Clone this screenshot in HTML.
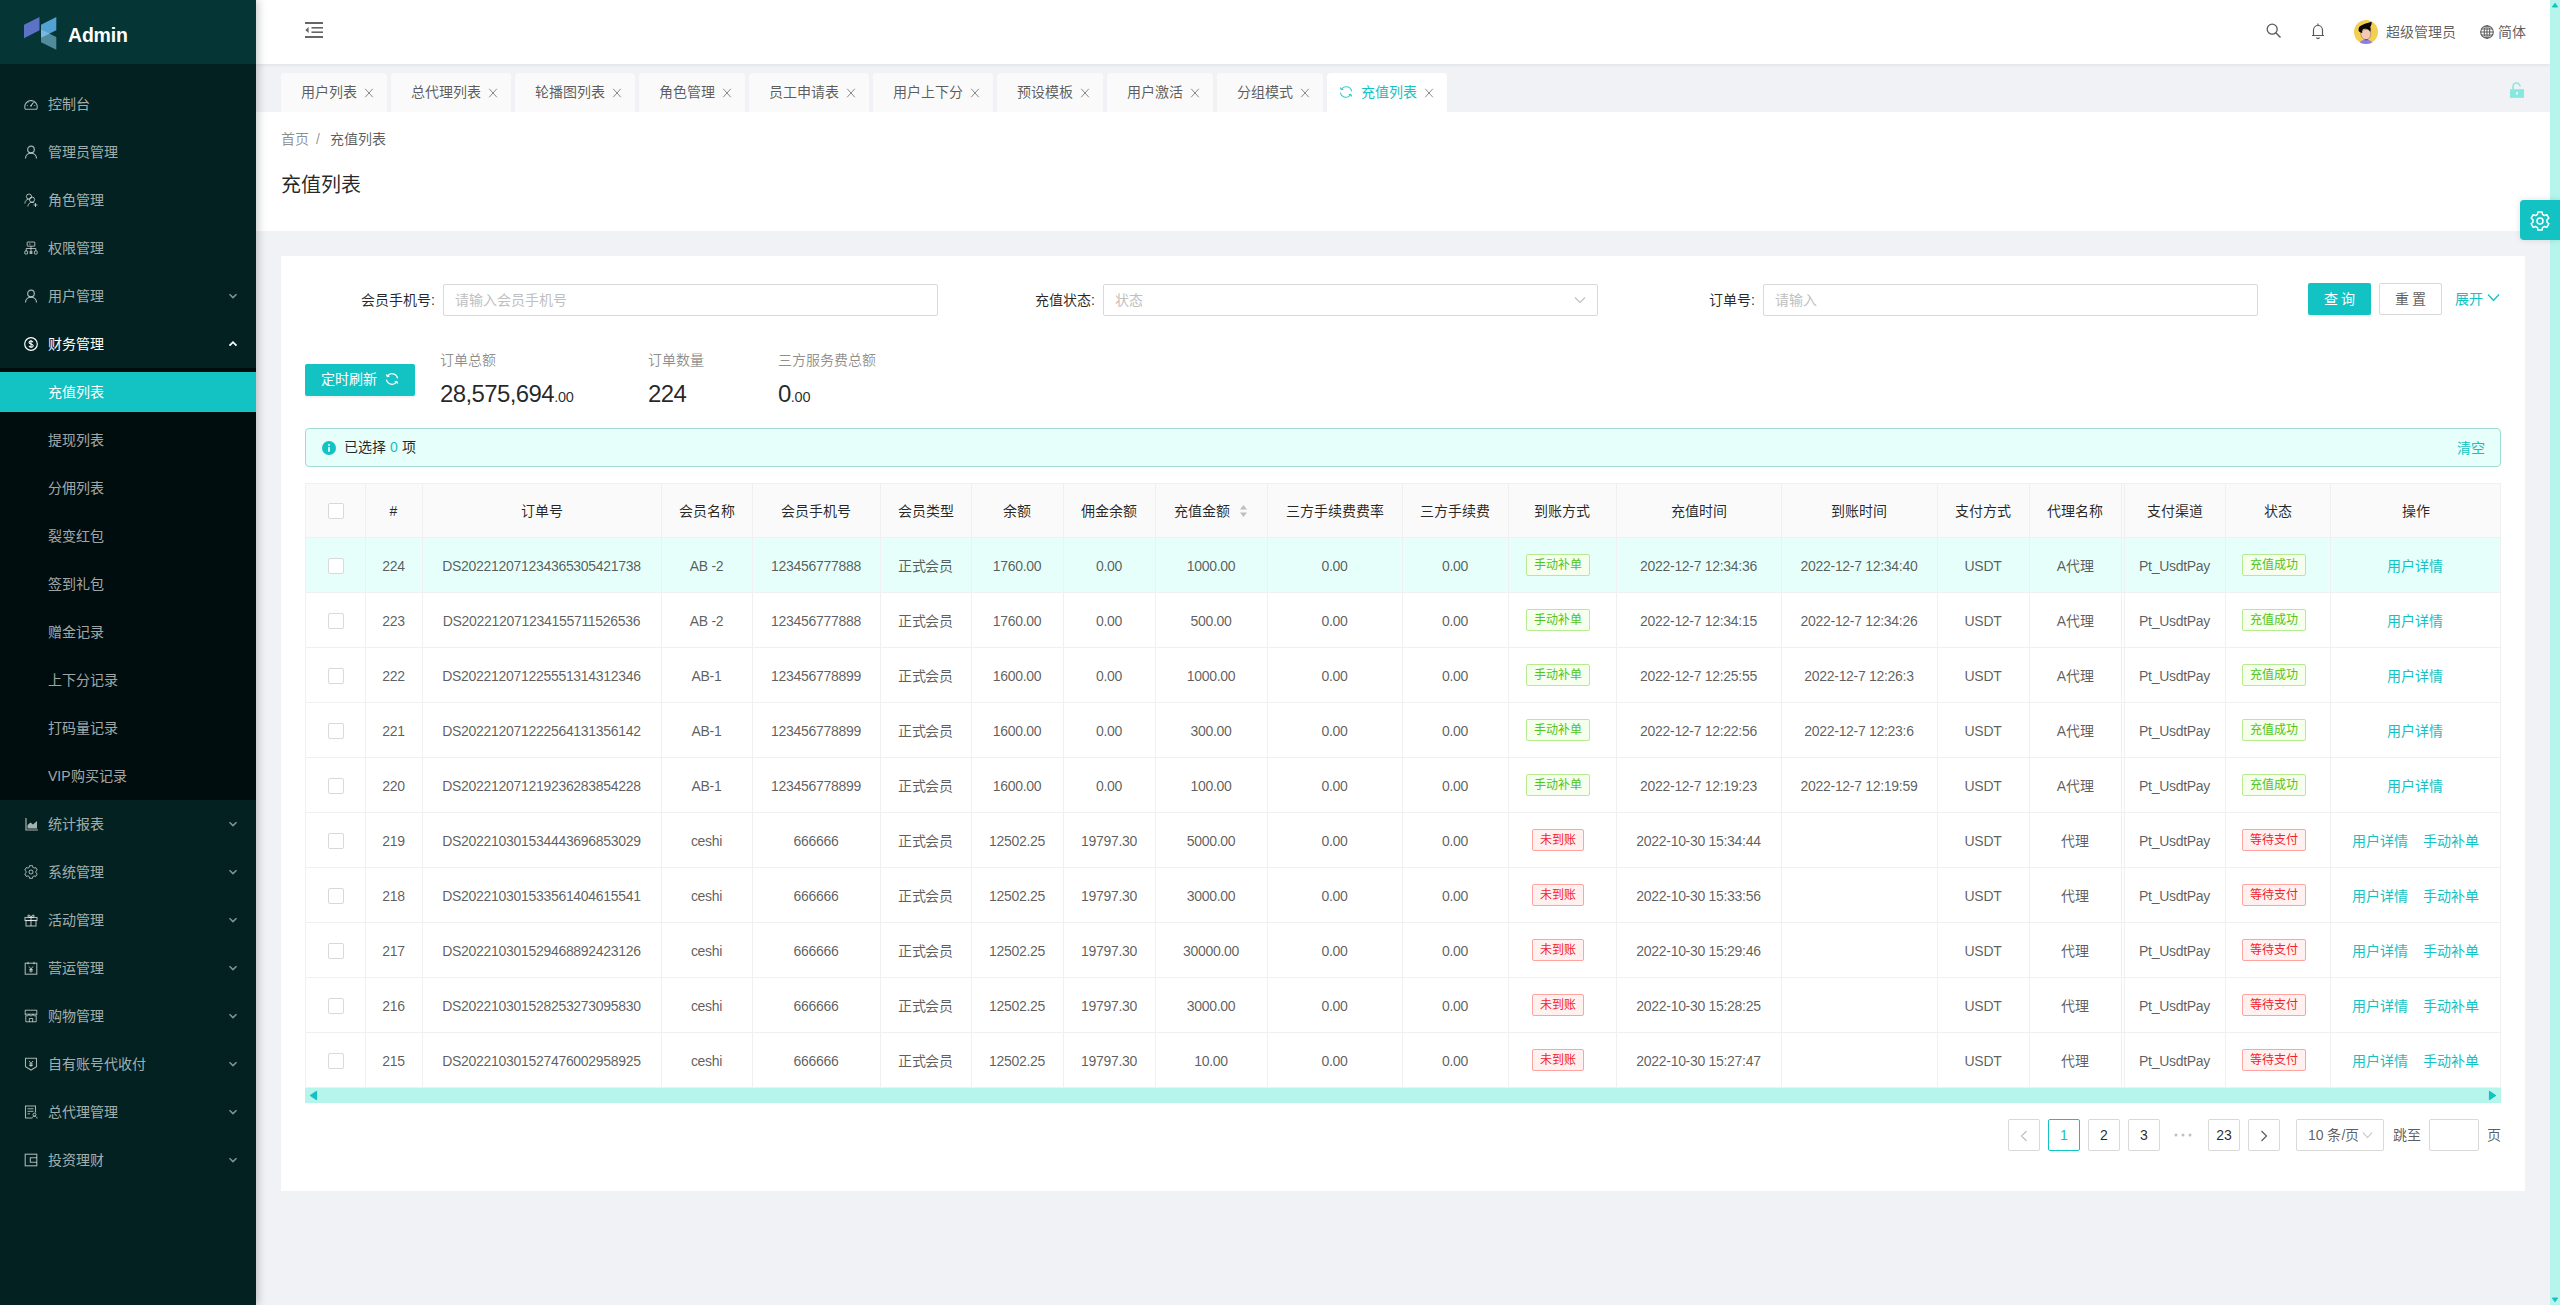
<!DOCTYPE html><html lang="zh-CN"><head><meta charset="utf-8"><title>充值列表</title><style>
html,body{margin:0;padding:0}
body{width:2560px;height:1305px;overflow:hidden;position:relative;background:#f0f2f5;font-family:"Liberation Sans",sans-serif;font-size:14px;}
.t{position:absolute;white-space:nowrap}
.b{position:absolute;box-sizing:border-box}
</style></head><body>
<div class="b" style="left:256px;top:0px;width:2294px;height:64px;background:#fff;box-shadow:0 1px 4px rgba(0,21,41,.08);z-index:2"></div>
<div class="b" style="left:256px;top:112px;width:2294px;height:119px;background:#fff"></div>
<div class="b" style="left:281px;top:256px;width:2244px;height:935px;background:#fff"></div>
<div class="b" style="left:0;top:0;width:256px;height:1305px;background:#022120;box-shadow:2px 0 8px rgba(29,35,41,.25);z-index:5">
<div class="b" style="left:0px;top:0px;width:256px;height:64px;background:#053535"></div>
<svg class="b" style="left:23px;top:16px;" width="35" height="35" viewBox="0 0 35 35">
<polygon points="1,8.7 16.5,1 16.5,14.3 1,22.3" fill="#5b72c6"/>
<polygon points="18,8.7 33.3,1 33.3,14.3 18,21.8" fill="#52a3d3"/>
<polygon points="18,13.4 33.3,20.9 33.3,33.8 18,26.3" fill="#4f8b9b"/>
<polygon points="18,13.4 26.9,17.4 18,21.8" fill="#78b8e3"/>
</svg>
<div class="t" style="left:68px;top:20.0px;font-size:19.5px;line-height:30px;color:#fff;font-weight:bold;letter-spacing:-0.2px">Admin</div>
<div style="color:rgba(255,255,255,.65)"><svg class="b" style="left:24px;top:97px" width="14" height="14" viewBox="0 0 14 14"><path d="M1.3 12.2A6.2 6.2 0 1 1 12.7 12.2z" fill="none" stroke="currentColor" stroke-width="1.1" stroke-linejoin="round"/><path d="M7 8.6 9.4 5.6" stroke="currentColor" stroke-width="1.1"/><circle cx="7" cy="8.8" r=".9" fill="currentColor"/><path d="M2.8 8.6h1M3.9 5l.6.6M7 3.4v.9M10.1 5l-.6.6M11.2 8.6h-1" stroke="currentColor" stroke-width=".9"/></svg></div>
<div class="t" style="left:48px;top:93.0px;font-size:14px;line-height:22px;color:rgba(255,255,255,.65);font-weight:normal;">控制台</div>
<div style="color:rgba(255,255,255,.65)"><svg class="b" style="left:24px;top:145px" width="14" height="14" viewBox="0 0 14 14"><circle cx="7" cy="4.5" r="3.3" fill="none" stroke="currentColor" stroke-width="1.2"/><path d="M1.5 13.5c0-3.2 2.4-5.3 5.5-5.3s5.5 2.1 5.5 5.3" fill="none" stroke="currentColor" stroke-width="1.2"/></svg></div>
<div class="t" style="left:48px;top:141.0px;font-size:14px;line-height:22px;color:rgba(255,255,255,.65);font-weight:normal;">管理员管理</div>
<div style="color:rgba(255,255,255,.65)"><svg class="b" style="left:24px;top:193px" width="14" height="14" viewBox="0 0 14 14"><circle cx="5" cy="3.6" r="2.6" fill="none" stroke="currentColor" stroke-width="1"/><path d="M.8 10.5c.2-2.6 1.8-4.2 3.6-4.3" fill="none" stroke="currentColor" stroke-width="1"/><circle cx="8" cy="6.6" r="2.6" fill="none" stroke="currentColor" stroke-width="1"/><path d="M3.8 13.5c.3-2.6 2-4.2 4.2-4.2 1 0 1.7.3 2.3.7" fill="none" stroke="currentColor" stroke-width="1"/><path d="M11.5 10v4M9.5 12h4" stroke="currentColor" stroke-width="1"/></svg></div>
<div class="t" style="left:48px;top:189.0px;font-size:14px;line-height:22px;color:rgba(255,255,255,.65);font-weight:normal;">角色管理</div>
<div style="color:rgba(255,255,255,.65)"><svg class="b" style="left:24px;top:241px" width="14" height="14" viewBox="0 0 14 14"><rect x="3.2" y="1" width="7.6" height="4.2" rx=".4" fill="none" stroke="currentColor" stroke-width="1"/><path d="M5 3.1h1.5" stroke="currentColor" stroke-width="1"/><path d="M7 5.2v2.3M2.2 10V7.5h9.6V10M7 7.5V10" fill="none" stroke="currentColor" stroke-width="1"/><rect x=".8" y="10" width="2.8" height="3" rx=".5" fill="none" stroke="currentColor" stroke-width="1"/><rect x="5.6" y="10" width="2.8" height="3" rx=".5" fill="currentColor"/><rect x="10.4" y="10" width="2.8" height="3" rx=".5" fill="none" stroke="currentColor" stroke-width="1"/></svg></div>
<div class="t" style="left:48px;top:237.0px;font-size:14px;line-height:22px;color:rgba(255,255,255,.65);font-weight:normal;">权限管理</div>
<div style="color:rgba(255,255,255,.65)"><svg class="b" style="left:24px;top:289px" width="14" height="14" viewBox="0 0 14 14"><circle cx="7" cy="4.5" r="3.3" fill="none" stroke="currentColor" stroke-width="1.2"/><path d="M1.5 13.5c0-3.2 2.4-5.3 5.5-5.3s5.5 2.1 5.5 5.3" fill="none" stroke="currentColor" stroke-width="1.2"/></svg></div>
<div class="t" style="left:48px;top:285.0px;font-size:14px;line-height:22px;color:rgba(255,255,255,.65);font-weight:normal;">用户管理</div>
<svg class="b" style="left:228px;top:291.5px" width="10" height="8" viewBox="0 0 10 8"><path d="M1.5 2.2 5 5.6 8.5 2.2" fill="none" stroke="rgba(255,255,255,.5)" stroke-width="1.6"/></svg>
<div style="color:#fff"><svg class="b" style="left:24px;top:337px" width="14" height="14" viewBox="0 0 14 14"><circle cx="7" cy="7" r="6.3" fill="none" stroke="currentColor" stroke-width="1.2"/><path d="M9 5.2c-.3-.8-1-1.2-2-1.2-1.2 0-2 .6-2 1.5 0 2 4.2 1.1 4.2 3.2 0 .9-.9 1.5-2.1 1.5-1.1 0-1.9-.5-2.2-1.3M7 3v8" fill="none" stroke="currentColor" stroke-width="1.1"/></svg></div>
<div class="t" style="left:48px;top:333.0px;font-size:14px;line-height:22px;color:#fff;font-weight:normal;">财务管理</div>
<svg class="b" style="left:228px;top:340px" width="10" height="8" viewBox="0 0 10 8"><path d="M1.5 5.6 5 2.2 8.5 5.6" fill="none" stroke="#fff" stroke-width="1.8"/></svg>
<div class="b" style="left:0px;top:368px;width:256px;height:432px;background:#000d0e"></div>
<div class="b" style="left:0px;top:372px;width:256px;height:40px;background:#13c2c2"></div>
<div class="t" style="left:48px;top:381.0px;font-size:14px;line-height:22px;color:#fff;font-weight:normal;">充值列表</div>
<div class="t" style="left:48px;top:429.0px;font-size:14px;line-height:22px;color:rgba(255,255,255,.65);font-weight:normal;">提现列表</div>
<div class="t" style="left:48px;top:477.0px;font-size:14px;line-height:22px;color:rgba(255,255,255,.65);font-weight:normal;">分佣列表</div>
<div class="t" style="left:48px;top:525.0px;font-size:14px;line-height:22px;color:rgba(255,255,255,.65);font-weight:normal;">裂变红包</div>
<div class="t" style="left:48px;top:573.0px;font-size:14px;line-height:22px;color:rgba(255,255,255,.65);font-weight:normal;">签到礼包</div>
<div class="t" style="left:48px;top:621.0px;font-size:14px;line-height:22px;color:rgba(255,255,255,.65);font-weight:normal;">赠金记录</div>
<div class="t" style="left:48px;top:669.0px;font-size:14px;line-height:22px;color:rgba(255,255,255,.65);font-weight:normal;">上下分记录</div>
<div class="t" style="left:48px;top:717.0px;font-size:14px;line-height:22px;color:rgba(255,255,255,.65);font-weight:normal;">打码量记录</div>
<div class="t" style="left:48px;top:765.0px;font-size:14px;line-height:22px;color:rgba(255,255,255,.65);font-weight:normal;">VIP购买记录</div>
<div style="color:rgba(255,255,255,.65)"><svg class="b" style="left:25px;top:817px" width="14" height="14" viewBox="0 0 14 14"><path d="M1 1v12h12" fill="none" stroke="currentColor" stroke-width="1.2"/><path d="M2.5 11.5V8l3-2.5 2.5 2 4-3.5v7.5z" fill="currentColor"/></svg></div>
<div class="t" style="left:48px;top:813.0px;font-size:14px;line-height:22px;color:rgba(255,255,255,.65);font-weight:normal;">统计报表</div>
<svg class="b" style="left:228px;top:819.5px" width="10" height="8" viewBox="0 0 10 8"><path d="M1.5 2.2 5 5.6 8.5 2.2" fill="none" stroke="rgba(255,255,255,.5)" stroke-width="1.6"/></svg>
<div style="color:rgba(255,255,255,.65)"><svg class="b" style="left:24px;top:865px" width="14" height="14" viewBox="0 0 14 14"><path d="M4.55 2.76 L5.16 2.46 L5.54 0.67 L8.46 0.67 L8.84 2.46 L9.45 2.76 L10.02 3.14 L11.75 2.57 L13.22 5.10 L11.85 6.32 L11.90 7.00 L11.85 7.68 L13.22 8.90 L11.75 11.43 L10.02 10.86 L9.45 11.24 L8.84 11.54 L8.46 13.33 L5.54 13.33 L5.16 11.54 L4.55 11.24 L3.98 10.86 L2.25 11.43 L0.78 8.90 L2.15 7.68 L2.10 7.00 L2.15 6.32 L0.78 5.10 L2.25 2.57 L3.98 3.14z" fill="none" stroke="currentColor" stroke-width="1" stroke-linejoin="round"/><circle cx="7" cy="7" r="2" fill="none" stroke="currentColor" stroke-width="1"/></svg></div>
<div class="t" style="left:48px;top:861.0px;font-size:14px;line-height:22px;color:rgba(255,255,255,.65);font-weight:normal;">系统管理</div>
<svg class="b" style="left:228px;top:867.5px" width="10" height="8" viewBox="0 0 10 8"><path d="M1.5 2.2 5 5.6 8.5 2.2" fill="none" stroke="rgba(255,255,255,.5)" stroke-width="1.6"/></svg>
<div style="color:rgba(255,255,255,.65)"><svg class="b" style="left:24px;top:913px" width="14" height="14" viewBox="0 0 14 14"><rect x="1" y="4.5" width="12" height="3" fill="none" stroke="currentColor" stroke-width="1.1"/><rect x="2" y="7.5" width="10" height="5.5" fill="none" stroke="currentColor" stroke-width="1.1"/><path d="M7 4.5V13M7 4.5C6 2 4 1.5 4 3s3 1.5 3 1.5M7 4.5C8 2 10 1.5 10 3s-3 1.5-3 1.5" fill="none" stroke="currentColor" stroke-width="1.1"/></svg></div>
<div class="t" style="left:48px;top:909.0px;font-size:14px;line-height:22px;color:rgba(255,255,255,.65);font-weight:normal;">活动管理</div>
<svg class="b" style="left:228px;top:915.5px" width="10" height="8" viewBox="0 0 10 8"><path d="M1.5 2.2 5 5.6 8.5 2.2" fill="none" stroke="rgba(255,255,255,.5)" stroke-width="1.6"/></svg>
<div style="color:rgba(255,255,255,.65)"><svg class="b" style="left:24px;top:961px" width="14" height="14" viewBox="0 0 14 14"><rect x="1.2" y="2.2" width="11.6" height="11" fill="none" stroke="currentColor" stroke-width="1.1"/><path d="M4 .8v2.5M10 .8v2.5M5 5.5l2 2.5 2-2.5M7 8v3.5M5.2 8.5h3.6M5.2 10h3.6" fill="none" stroke="currentColor" stroke-width="1"/></svg></div>
<div class="t" style="left:48px;top:957.0px;font-size:14px;line-height:22px;color:rgba(255,255,255,.65);font-weight:normal;">营运管理</div>
<svg class="b" style="left:228px;top:963.5px" width="10" height="8" viewBox="0 0 10 8"><path d="M1.5 2.2 5 5.6 8.5 2.2" fill="none" stroke="rgba(255,255,255,.5)" stroke-width="1.6"/></svg>
<div style="color:rgba(255,255,255,.65)"><svg class="b" style="left:24px;top:1009px" width="14" height="14" viewBox="0 0 14 14"><path d="M1.2 5.2V1.2h11.6v4M1.2 5.2c0 1 .8 1.6 1.9 1.6S5 6.2 5 5.2c0 1 .9 1.6 2 1.6s2-.6 2-1.6c0 1 .8 1.6 1.9 1.6s1.9-.6 1.9-1.6M1.2 5.2h11.6M1.8 6.8v6h10.4v-6" fill="none" stroke="currentColor" stroke-width="1"/><path d="M5.3 12.8V9.5h3.4v3.3" fill="none" stroke="currentColor" stroke-width="1"/></svg></div>
<div class="t" style="left:48px;top:1005.0px;font-size:14px;line-height:22px;color:rgba(255,255,255,.65);font-weight:normal;">购物管理</div>
<svg class="b" style="left:228px;top:1011.5px" width="10" height="8" viewBox="0 0 10 8"><path d="M1.5 2.2 5 5.6 8.5 2.2" fill="none" stroke="rgba(255,255,255,.5)" stroke-width="1.6"/></svg>
<div style="color:rgba(255,255,255,.65)"><svg class="b" style="left:24px;top:1057px" width="14" height="14" viewBox="0 0 14 14"><path d="M1.5 1.2h11v8.5L7 13 1.5 9.7z" fill="none" stroke="currentColor" stroke-width="1.1"/><path d="M5 4l2 2.3 2-2.3M7 6.3v3.5M5.2 7h3.6M5.2 8.5h3.6" fill="none" stroke="currentColor" stroke-width="1"/></svg></div>
<div class="t" style="left:48px;top:1053.0px;font-size:14px;line-height:22px;color:rgba(255,255,255,.65);font-weight:normal;">自有账号代收付</div>
<svg class="b" style="left:228px;top:1059.5px" width="10" height="8" viewBox="0 0 10 8"><path d="M1.5 2.2 5 5.6 8.5 2.2" fill="none" stroke="rgba(255,255,255,.5)" stroke-width="1.6"/></svg>
<div style="color:rgba(255,255,255,.65)"><svg class="b" style="left:24px;top:1105px" width="14" height="14" viewBox="0 0 14 14"><path d="M7.5 13H1.5V1h10v6.5" fill="none" stroke="currentColor" stroke-width="1.1"/><path d="M3.5 3.8h6M3.5 6.3h6M3.5 8.8h2.5" stroke="currentColor" stroke-width="1"/><circle cx="10.5" cy="9.6" r="1.5" fill="none" stroke="currentColor" stroke-width="1"/><path d="M7.8 13.6c.3-1.5 1.3-2.4 2.7-2.4s2.4.9 2.7 2.4" fill="none" stroke="currentColor" stroke-width="1"/></svg></div>
<div class="t" style="left:48px;top:1101.0px;font-size:14px;line-height:22px;color:rgba(255,255,255,.65);font-weight:normal;">总代理管理</div>
<svg class="b" style="left:228px;top:1107.5px" width="10" height="8" viewBox="0 0 10 8"><path d="M1.5 2.2 5 5.6 8.5 2.2" fill="none" stroke="rgba(255,255,255,.5)" stroke-width="1.6"/></svg>
<div style="color:rgba(255,255,255,.65)"><svg class="b" style="left:24px;top:1153px" width="14" height="14" viewBox="0 0 14 14"><rect x="1.2" y="1.2" width="11.6" height="11.6" fill="none" stroke="currentColor" stroke-width="1.1"/><path d="M12.8 4.8H6.3v4.4h6.5" fill="none" stroke="currentColor" stroke-width="1.1"/></svg></div>
<div class="t" style="left:48px;top:1149.0px;font-size:14px;line-height:22px;color:rgba(255,255,255,.65);font-weight:normal;">投资理财</div>
<svg class="b" style="left:228px;top:1155.5px" width="10" height="8" viewBox="0 0 10 8"><path d="M1.5 2.2 5 5.6 8.5 2.2" fill="none" stroke="rgba(255,255,255,.5)" stroke-width="1.6"/></svg>
</div>
<div style="position:absolute;left:0;top:0;z-index:3">
<svg class="b" style="left:305px;top:22px;" width="18" height="16" viewBox="0 0 18 16"><rect x="0" y="0" width="18" height="2" fill="#666"/><rect x="0" y="14" width="18" height="2" fill="#666"/><rect x="6.5" y="5" width="11.5" height="1.6" fill="#666"/><rect x="6.5" y="9.4" width="11.5" height="1.6" fill="#666"/><polygon points="0.3,8 3.6,5 3.6,11" fill="#666"/></svg>
<svg class="b" style="left:2266px;top:23px;" width="16" height="16" viewBox="0 0 16 16"><circle cx="6.2" cy="6.2" r="5" fill="none" stroke="#595959" stroke-width="1.3"/><path d="M9.8 9.8 14.5 14.5" stroke="#595959" stroke-width="1.4"/></svg>
<svg class="b" style="left:2311px;top:22px;" width="14" height="18" viewBox="0 0 14 18"><path d="M7 1.5V3M2.5 13V8a4.5 4.5 0 0 1 9 0v5M1 13.5h12M5.5 15.5a1.6 1.6 0 0 0 3 0" fill="none" stroke="#595959" stroke-width="1.2"/></svg>
<svg class="b" style="left:2354px;top:20px;" width="24" height="24" viewBox="0 0 24 24"><defs><clipPath id="av"><circle cx="12" cy="12" r="12"/></clipPath></defs>
<g clip-path="url(#av)"><rect width="24" height="24" fill="#f2cf4f"/>
<path d="M4.5 24.5C5.5 21.5 8.5 19.6 12 19.6s6.5 1.9 7.5 4.9z" fill="#8c80e6"/>
<ellipse cx="12.3" cy="19.4" rx="1.7" ry=".8" fill="#222"/>
<path d="M6.6 10.5C6.4 16.5 8.8 19.6 12 19.6c3.2 0 4.7-2.6 4.7-6.6V8.5z" fill="#f5c9b6" stroke="#4a3a30" stroke-width=".35"/>
<path d="M4.6 10.8C4.2 8.2 5.3 6.2 7.2 5.6 9.6 3.8 13.2 3.1 17.6 1.8c.3 2-.4 3.9-1.3 4.9.5 2 .3 4-.1 5.4-.9-2.4-2.6-3.6-5.8-3.4-1.6.1-2.4 1.2-2.2 4.2-1.4 0-2.8-.8-3.6-2.1z" fill="#0a0a0a"/>
</g></svg>
<div class="t" style="left:2386px;top:21.0px;font-size:14px;line-height:22px;color:rgba(0,0,0,.65);font-weight:normal;">超级管理员</div>
<svg class="b" style="left:2480px;top:25px;" width="14" height="14" viewBox="0 0 14 14"><circle cx="7" cy="7" r="6.3" fill="none" stroke="#595959" stroke-width="1.1"/><ellipse cx="7" cy="7" rx="2.8" ry="6.3" fill="none" stroke="#595959" stroke-width="1"/><path d="M.7 7h12.6M1.6 4h10.8M1.6 10h10.8M7 .7v12.6" stroke="#595959" stroke-width="1"/></svg>
<div class="t" style="left:2498px;top:21.0px;font-size:14px;line-height:22px;color:rgba(0,0,0,.65);font-weight:normal;">简体</div>
</div>
<div class="b" style="left:281px;top:73px;width:106px;height:39px;background:#fafafa;border-radius:4px 4px 0 0"></div>
<div class="t" style="left:301px;top:81.0px;font-size:14px;line-height:22px;color:rgba(0,0,0,.65);font-weight:normal;">用户列表</div>
<svg class="b" style="left:364px;top:88px" width="10" height="10" viewBox="0 0 10 10"><path d="M1.2 .8 8.8 9.2M8.8 .8 1.2 9.2" stroke="rgba(0,0,0,.45)" stroke-width="1"/></svg>
<div class="b" style="left:391px;top:73px;width:120px;height:39px;background:#fafafa;border-radius:4px 4px 0 0"></div>
<div class="t" style="left:411px;top:81.0px;font-size:14px;line-height:22px;color:rgba(0,0,0,.65);font-weight:normal;">总代理列表</div>
<svg class="b" style="left:488px;top:88px" width="10" height="10" viewBox="0 0 10 10"><path d="M1.2 .8 8.8 9.2M8.8 .8 1.2 9.2" stroke="rgba(0,0,0,.45)" stroke-width="1"/></svg>
<div class="b" style="left:515px;top:73px;width:120px;height:39px;background:#fafafa;border-radius:4px 4px 0 0"></div>
<div class="t" style="left:535px;top:81.0px;font-size:14px;line-height:22px;color:rgba(0,0,0,.65);font-weight:normal;">轮播图列表</div>
<svg class="b" style="left:612px;top:88px" width="10" height="10" viewBox="0 0 10 10"><path d="M1.2 .8 8.8 9.2M8.8 .8 1.2 9.2" stroke="rgba(0,0,0,.45)" stroke-width="1"/></svg>
<div class="b" style="left:639px;top:73px;width:106px;height:39px;background:#fafafa;border-radius:4px 4px 0 0"></div>
<div class="t" style="left:659px;top:81.0px;font-size:14px;line-height:22px;color:rgba(0,0,0,.65);font-weight:normal;">角色管理</div>
<svg class="b" style="left:722px;top:88px" width="10" height="10" viewBox="0 0 10 10"><path d="M1.2 .8 8.8 9.2M8.8 .8 1.2 9.2" stroke="rgba(0,0,0,.45)" stroke-width="1"/></svg>
<div class="b" style="left:749px;top:73px;width:120px;height:39px;background:#fafafa;border-radius:4px 4px 0 0"></div>
<div class="t" style="left:769px;top:81.0px;font-size:14px;line-height:22px;color:rgba(0,0,0,.65);font-weight:normal;">员工申请表</div>
<svg class="b" style="left:846px;top:88px" width="10" height="10" viewBox="0 0 10 10"><path d="M1.2 .8 8.8 9.2M8.8 .8 1.2 9.2" stroke="rgba(0,0,0,.45)" stroke-width="1"/></svg>
<div class="b" style="left:873px;top:73px;width:120px;height:39px;background:#fafafa;border-radius:4px 4px 0 0"></div>
<div class="t" style="left:893px;top:81.0px;font-size:14px;line-height:22px;color:rgba(0,0,0,.65);font-weight:normal;">用户上下分</div>
<svg class="b" style="left:970px;top:88px" width="10" height="10" viewBox="0 0 10 10"><path d="M1.2 .8 8.8 9.2M8.8 .8 1.2 9.2" stroke="rgba(0,0,0,.45)" stroke-width="1"/></svg>
<div class="b" style="left:997px;top:73px;width:106px;height:39px;background:#fafafa;border-radius:4px 4px 0 0"></div>
<div class="t" style="left:1017px;top:81.0px;font-size:14px;line-height:22px;color:rgba(0,0,0,.65);font-weight:normal;">预设模板</div>
<svg class="b" style="left:1080px;top:88px" width="10" height="10" viewBox="0 0 10 10"><path d="M1.2 .8 8.8 9.2M8.8 .8 1.2 9.2" stroke="rgba(0,0,0,.45)" stroke-width="1"/></svg>
<div class="b" style="left:1107px;top:73px;width:106px;height:39px;background:#fafafa;border-radius:4px 4px 0 0"></div>
<div class="t" style="left:1127px;top:81.0px;font-size:14px;line-height:22px;color:rgba(0,0,0,.65);font-weight:normal;">用户激活</div>
<svg class="b" style="left:1190px;top:88px" width="10" height="10" viewBox="0 0 10 10"><path d="M1.2 .8 8.8 9.2M8.8 .8 1.2 9.2" stroke="rgba(0,0,0,.45)" stroke-width="1"/></svg>
<div class="b" style="left:1217px;top:73px;width:106px;height:39px;background:#fafafa;border-radius:4px 4px 0 0"></div>
<div class="t" style="left:1237px;top:81.0px;font-size:14px;line-height:22px;color:rgba(0,0,0,.65);font-weight:normal;">分组模式</div>
<svg class="b" style="left:1300px;top:88px" width="10" height="10" viewBox="0 0 10 10"><path d="M1.2 .8 8.8 9.2M8.8 .8 1.2 9.2" stroke="rgba(0,0,0,.45)" stroke-width="1"/></svg>
<div class="b" style="left:1327px;top:73px;width:120px;height:39px;background:#fff;border-radius:4px 4px 0 0"></div>
<svg class="b" style="left:1339px;top:85px;" width="14" height="14" viewBox="0 0 14 14"><path d="M12.6 6.3A5.7 5.7 0 0 0 2.3 4.2M1.4 7.7a5.7 5.7 0 0 0 10.3 2.1" fill="none" stroke="#13c2c2" stroke-width="1.1" opacity=".85"/><path d="M1.3 2.6 2.3 4.6 4.4 4.2M12.7 11.4 11.7 9.4 9.6 9.8" fill="none" stroke="#13c2c2" stroke-width="1.1" opacity=".85"/></svg>
<div class="t" style="left:1361px;top:81.0px;font-size:14px;line-height:22px;color:#13c2c2;font-weight:normal;">充值列表</div>
<svg class="b" style="left:1424px;top:88px" width="10" height="10" viewBox="0 0 10 10"><path d="M1.2 .8 8.8 9.2M8.8 .8 1.2 9.2" stroke="rgba(0,0,0,.45)" stroke-width="1"/></svg>
<svg class="b" style="left:2510px;top:82px;" width="14" height="16" viewBox="0 0 14 16"><path d="M3 7.5V4.5a3.5 3.5 0 0 1 7 0" fill="none" stroke="#87e8de" stroke-width="1.6"/><rect x="0" y="7.2" width="14" height="8.6" fill="#87e8de"/><rect x="6.2" y="10" width="1.6" height="2.6" fill="#e6fffb"/></svg>
<div class="t" style="left:281px;top:128.0px;font-size:14px;line-height:22px;color:rgba(0,0,0,.45);font-weight:normal;">首页</div>
<div class="t" style="left:316px;top:128.0px;font-size:14px;line-height:22px;color:rgba(0,0,0,.45);font-weight:normal;">/</div>
<div class="t" style="left:330px;top:128.0px;font-size:14px;line-height:22px;color:rgba(0,0,0,.65);font-weight:normal;">充值列表</div>
<div class="t" style="left:281px;top:171.0px;font-size:20px;line-height:28px;color:rgba(0,0,0,.85);font-weight:normal;">充值列表</div>
<div class="t" style="left:35px;width:400px;text-align:right;top:289.0px;font-size:14px;line-height:22px;color:rgba(0,0,0,.85);font-weight:normal">会员手机号:</div>
<div class="b" style="left:443px;top:284px;width:495px;height:32px;border:1px solid #d9d9d9;border-radius:2px;background:#fff"></div>
<div class="t" style="left:455px;top:289.0px;font-size:14px;line-height:22px;color:#bfbfbf;font-weight:normal;">请输入会员手机号</div>
<div class="t" style="left:695px;width:400px;text-align:right;top:289.0px;font-size:14px;line-height:22px;color:rgba(0,0,0,.85);font-weight:normal">充值状态:</div>
<div class="b" style="left:1103px;top:284px;width:495px;height:32px;border:1px solid #d9d9d9;border-radius:2px;background:#fff"></div>
<div class="t" style="left:1115px;top:289.0px;font-size:14px;line-height:22px;color:#bfbfbf;font-weight:normal;">状态</div>
<svg class="b" style="left:1574px;top:295px;" width="12" height="10" viewBox="0 0 12 10"><path d="M1 2.5 6 7.5 11 2.5" fill="none" stroke="rgba(0,0,0,.25)" stroke-width="1.2"/></svg>
<div class="t" style="left:1355px;width:400px;text-align:right;top:289.0px;font-size:14px;line-height:22px;color:rgba(0,0,0,.85);font-weight:normal">订单号:</div>
<div class="b" style="left:1763px;top:284px;width:495px;height:32px;border:1px solid #d9d9d9;border-radius:2px;background:#fff"></div>
<div class="t" style="left:1775px;top:289.0px;font-size:14px;line-height:22px;color:#bfbfbf;font-weight:normal;">请输入</div>
<div class="b" style="left:2308px;top:283px;width:63px;height:32px;background:#13c2c2;border-radius:2px;box-shadow:0 2px 0 rgba(0,0,0,.045)"></div>
<div class="t" style="left:2308.0px;width:63px;text-align:center;top:288.0px;font-size:14px;line-height:22px;color:#fff;font-weight:normal;">查&nbsp;询</div>
<div class="b" style="left:2379px;top:283px;width:63px;height:32px;border:1px solid #d9d9d9;border-radius:2px;background:#fff"></div>
<div class="t" style="left:2379.0px;width:63px;text-align:center;top:288.0px;font-size:14px;line-height:22px;color:rgba(0,0,0,.65);font-weight:normal;">重&nbsp;置</div>
<div class="t" style="left:2455px;top:288.0px;font-size:14px;line-height:22px;color:#13c2c2;font-weight:normal;">展开</div>
<svg class="b" style="left:2487px;top:293px;" width="13" height="10" viewBox="0 0 13 10"><path d="M1 1.5 6.5 7.5 12 1.5" fill="none" stroke="#13c2c2" stroke-width="1.3"/></svg>
<div class="b" style="left:305px;top:364px;width:110px;height:32px;background:#13c2c2;border-radius:2px;box-shadow:0 2px 0 rgba(0,0,0,.045)"></div>
<div class="t" style="left:321px;top:368.0px;font-size:14px;line-height:22px;color:#fff;font-weight:normal;">定时刷新</div>
<svg class="b" style="left:385px;top:372px;" width="14" height="14" viewBox="0 0 14 14"><path d="M12.6 6.3A5.7 5.7 0 0 0 2.3 4.2M1.4 7.7a5.7 5.7 0 0 0 10.3 2.1" fill="none" stroke="#fff" stroke-width="1.2"/><path d="M1.3 2.6 2.3 4.6 4.4 4.2M12.7 11.4 11.7 9.4 9.6 9.8" fill="none" stroke="#fff" stroke-width="1.2"/></svg>
<div class="t" style="left:440px;top:349.0px;font-size:14px;line-height:22px;color:rgba(0,0,0,.45);font-weight:normal;">订单总额</div>
<div class="t" style="left:440px;top:378px;font-size:24px;line-height:32px;color:rgba(0,0,0,.85);letter-spacing:-0.6px">28,575,694<span style="font-size:14.5px;letter-spacing:-0.2px">.00</span></div>
<div class="t" style="left:648px;top:349.0px;font-size:14px;line-height:22px;color:rgba(0,0,0,.45);font-weight:normal;">订单数量</div>
<div class="t" style="left:648px;top:378px;font-size:24px;line-height:32px;color:rgba(0,0,0,.85);letter-spacing:-0.6px">224</div>
<div class="t" style="left:778px;top:349.0px;font-size:14px;line-height:22px;color:rgba(0,0,0,.45);font-weight:normal;">三方服务费总额</div>
<div class="t" style="left:778px;top:378px;font-size:24px;line-height:32px;color:rgba(0,0,0,.85);letter-spacing:-0.6px">0<span style="font-size:14.5px;letter-spacing:-0.2px">.00</span></div>
<div class="b" style="left:305px;top:428px;width:2196px;height:39px;background:#e6fffb;border:1px solid #a3dbd4;border-radius:4px"></div>
<svg class="b" style="left:322px;top:441px;" width="14" height="14" viewBox="0 0 14 14"><circle cx="7" cy="7" r="7" fill="#13c2c2"/><rect x="6.2" y="6" width="1.6" height="4.8" fill="#fff"/><circle cx="7" cy="4" r=".9" fill="#fff"/></svg>
<div class="t" style="left:344px;top:436px;line-height:22px;color:rgba(0,0,0,.85)">已选择 <span style="color:#13c2c2">0</span> 项</div>
<div class="t" style="left:2457px;top:437.0px;font-size:14px;line-height:22px;color:#13c2c2;font-weight:normal;">清空</div>
<div class="b" style="left:305px;top:483px;width:2196px;height:55px;background:#fafafa;border-radius:2px 2px 0 0"></div>
<div class="b" style="left:305px;top:538px;width:2196px;height:55px;background:#e6fffb"></div>
<div class="b" style="left:305px;top:483px;width:2196px;height:1px;background:#f0f0f0"></div>
<div class="b" style="left:305px;top:537px;width:2196px;height:1px;background:#f0f0f0"></div>
<div class="b" style="left:305px;top:592px;width:2196px;height:1px;background:#f0f0f0"></div>
<div class="b" style="left:305px;top:647px;width:2196px;height:1px;background:#f0f0f0"></div>
<div class="b" style="left:305px;top:702px;width:2196px;height:1px;background:#f0f0f0"></div>
<div class="b" style="left:305px;top:757px;width:2196px;height:1px;background:#f0f0f0"></div>
<div class="b" style="left:305px;top:812px;width:2196px;height:1px;background:#f0f0f0"></div>
<div class="b" style="left:305px;top:867px;width:2196px;height:1px;background:#f0f0f0"></div>
<div class="b" style="left:305px;top:922px;width:2196px;height:1px;background:#f0f0f0"></div>
<div class="b" style="left:305px;top:977px;width:2196px;height:1px;background:#f0f0f0"></div>
<div class="b" style="left:305px;top:1032px;width:2196px;height:1px;background:#f0f0f0"></div>
<div class="b" style="left:305px;top:1087px;width:2196px;height:1px;background:#f0f0f0"></div>
<div class="b" style="left:305px;top:483px;width:1px;height:605px;background:#f0f0f0"></div>
<div class="b" style="left:365px;top:483px;width:1px;height:605px;background:#f0f0f0"></div>
<div class="b" style="left:422px;top:483px;width:1px;height:605px;background:#f0f0f0"></div>
<div class="b" style="left:661px;top:483px;width:1px;height:605px;background:#f0f0f0"></div>
<div class="b" style="left:752px;top:483px;width:1px;height:605px;background:#f0f0f0"></div>
<div class="b" style="left:880px;top:483px;width:1px;height:605px;background:#f0f0f0"></div>
<div class="b" style="left:971px;top:483px;width:1px;height:605px;background:#f0f0f0"></div>
<div class="b" style="left:1063px;top:483px;width:1px;height:605px;background:#f0f0f0"></div>
<div class="b" style="left:1155px;top:483px;width:1px;height:605px;background:#f0f0f0"></div>
<div class="b" style="left:1267px;top:483px;width:1px;height:605px;background:#f0f0f0"></div>
<div class="b" style="left:1402px;top:483px;width:1px;height:605px;background:#f0f0f0"></div>
<div class="b" style="left:1508px;top:483px;width:1px;height:605px;background:#f0f0f0"></div>
<div class="b" style="left:1616px;top:483px;width:1px;height:605px;background:#f0f0f0"></div>
<div class="b" style="left:1781px;top:483px;width:1px;height:605px;background:#f0f0f0"></div>
<div class="b" style="left:1937px;top:483px;width:1px;height:605px;background:#f0f0f0"></div>
<div class="b" style="left:2029px;top:483px;width:1px;height:605px;background:#f0f0f0"></div>
<div class="b" style="left:2121px;top:483px;width:1px;height:605px;background:#f0f0f0"></div>
<div class="b" style="left:2124px;top:483px;width:1px;height:605px;background:#f0f0f0"></div>
<div class="b" style="left:2225px;top:483px;width:1px;height:605px;background:#f0f0f0"></div>
<div class="b" style="left:2330px;top:483px;width:1px;height:605px;background:#f0f0f0"></div>
<div class="b" style="left:2500px;top:483px;width:1px;height:605px;background:#f0f0f0"></div>
<div class="b" style="left:328px;top:503px;width:16px;height:16px;border:1px solid #d9d9d9;border-radius:2px;background:#fff"></div>
<div class="t" style="left:365.0px;width:57px;text-align:center;top:500.0px;font-size:14px;line-height:22px;color:rgba(0,0,0,.85);font-weight:normal;">#</div>
<div class="t" style="left:422.0px;width:239px;text-align:center;top:500.0px;font-size:14px;line-height:22px;color:rgba(0,0,0,.85);font-weight:normal;">订单号</div>
<div class="t" style="left:661.0px;width:91px;text-align:center;top:500.0px;font-size:14px;line-height:22px;color:rgba(0,0,0,.85);font-weight:normal;">会员名称</div>
<div class="t" style="left:752.0px;width:128px;text-align:center;top:500.0px;font-size:14px;line-height:22px;color:rgba(0,0,0,.85);font-weight:normal;">会员手机号</div>
<div class="t" style="left:880.0px;width:91px;text-align:center;top:500.0px;font-size:14px;line-height:22px;color:rgba(0,0,0,.85);font-weight:normal;">会员类型</div>
<div class="t" style="left:971.0px;width:92px;text-align:center;top:500.0px;font-size:14px;line-height:22px;color:rgba(0,0,0,.85);font-weight:normal;">余额</div>
<div class="t" style="left:1063.0px;width:92px;text-align:center;top:500.0px;font-size:14px;line-height:22px;color:rgba(0,0,0,.85);font-weight:normal;">佣金余额</div>
<div class="t" style="left:1146.0px;width:112px;text-align:center;top:500.0px;font-size:14px;line-height:22px;color:rgba(0,0,0,.85);font-weight:normal;">充值金额</div>
<svg class="b" style="left:1239px;top:504px;" width="9" height="14" viewBox="0 0 9 14"><path d="M4.5 1 8 5.5H1z" fill="#bfbfbf"/><path d="M4.5 13 8 8.5H1z" fill="#bfbfbf"/></svg>
<div class="t" style="left:1267.0px;width:135px;text-align:center;top:500.0px;font-size:14px;line-height:22px;color:rgba(0,0,0,.85);font-weight:normal;">三方手续费费率</div>
<div class="t" style="left:1402.0px;width:106px;text-align:center;top:500.0px;font-size:14px;line-height:22px;color:rgba(0,0,0,.85);font-weight:normal;">三方手续费</div>
<div class="t" style="left:1508.0px;width:108px;text-align:center;top:500.0px;font-size:14px;line-height:22px;color:rgba(0,0,0,.85);font-weight:normal;">到账方式</div>
<div class="t" style="left:1616.0px;width:165px;text-align:center;top:500.0px;font-size:14px;line-height:22px;color:rgba(0,0,0,.85);font-weight:normal;">充值时间</div>
<div class="t" style="left:1781.0px;width:156px;text-align:center;top:500.0px;font-size:14px;line-height:22px;color:rgba(0,0,0,.85);font-weight:normal;">到账时间</div>
<div class="t" style="left:1937.0px;width:92px;text-align:center;top:500.0px;font-size:14px;line-height:22px;color:rgba(0,0,0,.85);font-weight:normal;">支付方式</div>
<div class="t" style="left:2027.5px;width:95px;text-align:center;top:500.0px;font-size:14px;line-height:22px;color:rgba(0,0,0,.85);font-weight:normal;">代理名称</div>
<div class="t" style="left:2124.0px;width:101px;text-align:center;top:500.0px;font-size:14px;line-height:22px;color:rgba(0,0,0,.85);font-weight:normal;">支付渠道</div>
<div class="t" style="left:2225.0px;width:105px;text-align:center;top:500.0px;font-size:14px;line-height:22px;color:rgba(0,0,0,.85);font-weight:normal;">状态</div>
<div class="t" style="left:2330.0px;width:171px;text-align:center;top:500.0px;font-size:14px;line-height:22px;color:rgba(0,0,0,.85);font-weight:normal;">操作</div>
<div class="b" style="left:328px;top:557.5px;width:16px;height:16px;border:1px solid #d9d9d9;border-radius:2px;background:#fff"></div>
<div class="t" style="left:365.0px;width:57px;text-align:center;top:554.5px;font-size:14px;line-height:22px;color:rgba(0,0,0,.65);font-weight:normal;letter-spacing:-0.3px">224</div>
<div class="t" style="left:422.0px;width:239px;text-align:center;top:554.5px;font-size:14px;line-height:22px;color:rgba(0,0,0,.65);font-weight:normal;letter-spacing:-0.3px">DS202212071234365305421738</div>
<div class="t" style="left:661.0px;width:91px;text-align:center;top:554.5px;font-size:14px;line-height:22px;color:rgba(0,0,0,.65);font-weight:normal;letter-spacing:-0.3px">AB -2</div>
<div class="t" style="left:752.0px;width:128px;text-align:center;top:554.5px;font-size:14px;line-height:22px;color:rgba(0,0,0,.65);font-weight:normal;letter-spacing:-0.3px">123456777888</div>
<div class="t" style="left:880.0px;width:91px;text-align:center;top:554.5px;font-size:14px;line-height:22px;color:rgba(0,0,0,.65);font-weight:normal;letter-spacing:-0.3px">正式会员</div>
<div class="t" style="left:971.0px;width:92px;text-align:center;top:554.5px;font-size:14px;line-height:22px;color:rgba(0,0,0,.65);font-weight:normal;letter-spacing:-0.3px">1760.00</div>
<div class="t" style="left:1063.0px;width:92px;text-align:center;top:554.5px;font-size:14px;line-height:22px;color:rgba(0,0,0,.65);font-weight:normal;letter-spacing:-0.3px">0.00</div>
<div class="t" style="left:1155.0px;width:112px;text-align:center;top:554.5px;font-size:14px;line-height:22px;color:rgba(0,0,0,.65);font-weight:normal;letter-spacing:-0.3px">1000.00</div>
<div class="t" style="left:1267.0px;width:135px;text-align:center;top:554.5px;font-size:14px;line-height:22px;color:rgba(0,0,0,.65);font-weight:normal;letter-spacing:-0.3px">0.00</div>
<div class="t" style="left:1402.0px;width:106px;text-align:center;top:554.5px;font-size:14px;line-height:22px;color:rgba(0,0,0,.65);font-weight:normal;letter-spacing:-0.3px">0.00</div>
<div class="b" style="left:1526.0px;top:554px;width:64px;height:22px;background:#f6ffed;border:1px solid #b7eb8f;color:#52c41a;border-radius:2px;font-size:12px;line-height:20px;text-align:center;white-space:nowrap">手动补单</div>
<div class="t" style="left:1616.0px;width:165px;text-align:center;top:554.5px;font-size:14px;line-height:22px;color:rgba(0,0,0,.65);font-weight:normal;letter-spacing:-0.3px">2022-12-7 12:34:36</div>
<div class="t" style="left:1781.0px;width:156px;text-align:center;top:554.5px;font-size:14px;line-height:22px;color:rgba(0,0,0,.65);font-weight:normal;letter-spacing:-0.3px">2022-12-7 12:34:40</div>
<div class="t" style="left:1937.0px;width:92px;text-align:center;top:554.5px;font-size:14px;line-height:22px;color:rgba(0,0,0,.65);font-weight:normal;letter-spacing:-0.3px">USDT</div>
<div class="t" style="left:2027.5px;width:95px;text-align:center;top:554.5px;font-size:14px;line-height:22px;color:rgba(0,0,0,.65);font-weight:normal;letter-spacing:-0.3px">A代理</div>
<div class="t" style="left:2124.0px;width:101px;text-align:center;top:554.5px;font-size:14px;line-height:22px;color:rgba(0,0,0,.65);font-weight:normal;letter-spacing:-0.3px">Pt_UsdtPay</div>
<div class="b" style="left:2241.5px;top:554px;width:64px;height:22px;background:#f6ffed;border:1px solid #b7eb8f;color:#52c41a;border-radius:2px;font-size:12px;line-height:20px;text-align:center;white-space:nowrap">充值成功</div>
<div class="t" style="left:2335.0px;width:160px;text-align:center;top:554.5px;font-size:14px;line-height:22px;color:#13c2c2;font-weight:normal;">用户详情</div>
<div class="b" style="left:328px;top:612.5px;width:16px;height:16px;border:1px solid #d9d9d9;border-radius:2px;background:#fff"></div>
<div class="t" style="left:365.0px;width:57px;text-align:center;top:609.5px;font-size:14px;line-height:22px;color:rgba(0,0,0,.65);font-weight:normal;letter-spacing:-0.3px">223</div>
<div class="t" style="left:422.0px;width:239px;text-align:center;top:609.5px;font-size:14px;line-height:22px;color:rgba(0,0,0,.65);font-weight:normal;letter-spacing:-0.3px">DS202212071234155711526536</div>
<div class="t" style="left:661.0px;width:91px;text-align:center;top:609.5px;font-size:14px;line-height:22px;color:rgba(0,0,0,.65);font-weight:normal;letter-spacing:-0.3px">AB -2</div>
<div class="t" style="left:752.0px;width:128px;text-align:center;top:609.5px;font-size:14px;line-height:22px;color:rgba(0,0,0,.65);font-weight:normal;letter-spacing:-0.3px">123456777888</div>
<div class="t" style="left:880.0px;width:91px;text-align:center;top:609.5px;font-size:14px;line-height:22px;color:rgba(0,0,0,.65);font-weight:normal;letter-spacing:-0.3px">正式会员</div>
<div class="t" style="left:971.0px;width:92px;text-align:center;top:609.5px;font-size:14px;line-height:22px;color:rgba(0,0,0,.65);font-weight:normal;letter-spacing:-0.3px">1760.00</div>
<div class="t" style="left:1063.0px;width:92px;text-align:center;top:609.5px;font-size:14px;line-height:22px;color:rgba(0,0,0,.65);font-weight:normal;letter-spacing:-0.3px">0.00</div>
<div class="t" style="left:1155.0px;width:112px;text-align:center;top:609.5px;font-size:14px;line-height:22px;color:rgba(0,0,0,.65);font-weight:normal;letter-spacing:-0.3px">500.00</div>
<div class="t" style="left:1267.0px;width:135px;text-align:center;top:609.5px;font-size:14px;line-height:22px;color:rgba(0,0,0,.65);font-weight:normal;letter-spacing:-0.3px">0.00</div>
<div class="t" style="left:1402.0px;width:106px;text-align:center;top:609.5px;font-size:14px;line-height:22px;color:rgba(0,0,0,.65);font-weight:normal;letter-spacing:-0.3px">0.00</div>
<div class="b" style="left:1526.0px;top:609px;width:64px;height:22px;background:#f6ffed;border:1px solid #b7eb8f;color:#52c41a;border-radius:2px;font-size:12px;line-height:20px;text-align:center;white-space:nowrap">手动补单</div>
<div class="t" style="left:1616.0px;width:165px;text-align:center;top:609.5px;font-size:14px;line-height:22px;color:rgba(0,0,0,.65);font-weight:normal;letter-spacing:-0.3px">2022-12-7 12:34:15</div>
<div class="t" style="left:1781.0px;width:156px;text-align:center;top:609.5px;font-size:14px;line-height:22px;color:rgba(0,0,0,.65);font-weight:normal;letter-spacing:-0.3px">2022-12-7 12:34:26</div>
<div class="t" style="left:1937.0px;width:92px;text-align:center;top:609.5px;font-size:14px;line-height:22px;color:rgba(0,0,0,.65);font-weight:normal;letter-spacing:-0.3px">USDT</div>
<div class="t" style="left:2027.5px;width:95px;text-align:center;top:609.5px;font-size:14px;line-height:22px;color:rgba(0,0,0,.65);font-weight:normal;letter-spacing:-0.3px">A代理</div>
<div class="t" style="left:2124.0px;width:101px;text-align:center;top:609.5px;font-size:14px;line-height:22px;color:rgba(0,0,0,.65);font-weight:normal;letter-spacing:-0.3px">Pt_UsdtPay</div>
<div class="b" style="left:2241.5px;top:609px;width:64px;height:22px;background:#f6ffed;border:1px solid #b7eb8f;color:#52c41a;border-radius:2px;font-size:12px;line-height:20px;text-align:center;white-space:nowrap">充值成功</div>
<div class="t" style="left:2335.0px;width:160px;text-align:center;top:609.5px;font-size:14px;line-height:22px;color:#13c2c2;font-weight:normal;">用户详情</div>
<div class="b" style="left:328px;top:667.5px;width:16px;height:16px;border:1px solid #d9d9d9;border-radius:2px;background:#fff"></div>
<div class="t" style="left:365.0px;width:57px;text-align:center;top:664.5px;font-size:14px;line-height:22px;color:rgba(0,0,0,.65);font-weight:normal;letter-spacing:-0.3px">222</div>
<div class="t" style="left:422.0px;width:239px;text-align:center;top:664.5px;font-size:14px;line-height:22px;color:rgba(0,0,0,.65);font-weight:normal;letter-spacing:-0.3px">DS202212071225551314312346</div>
<div class="t" style="left:661.0px;width:91px;text-align:center;top:664.5px;font-size:14px;line-height:22px;color:rgba(0,0,0,.65);font-weight:normal;letter-spacing:-0.3px">AB-1</div>
<div class="t" style="left:752.0px;width:128px;text-align:center;top:664.5px;font-size:14px;line-height:22px;color:rgba(0,0,0,.65);font-weight:normal;letter-spacing:-0.3px">123456778899</div>
<div class="t" style="left:880.0px;width:91px;text-align:center;top:664.5px;font-size:14px;line-height:22px;color:rgba(0,0,0,.65);font-weight:normal;letter-spacing:-0.3px">正式会员</div>
<div class="t" style="left:971.0px;width:92px;text-align:center;top:664.5px;font-size:14px;line-height:22px;color:rgba(0,0,0,.65);font-weight:normal;letter-spacing:-0.3px">1600.00</div>
<div class="t" style="left:1063.0px;width:92px;text-align:center;top:664.5px;font-size:14px;line-height:22px;color:rgba(0,0,0,.65);font-weight:normal;letter-spacing:-0.3px">0.00</div>
<div class="t" style="left:1155.0px;width:112px;text-align:center;top:664.5px;font-size:14px;line-height:22px;color:rgba(0,0,0,.65);font-weight:normal;letter-spacing:-0.3px">1000.00</div>
<div class="t" style="left:1267.0px;width:135px;text-align:center;top:664.5px;font-size:14px;line-height:22px;color:rgba(0,0,0,.65);font-weight:normal;letter-spacing:-0.3px">0.00</div>
<div class="t" style="left:1402.0px;width:106px;text-align:center;top:664.5px;font-size:14px;line-height:22px;color:rgba(0,0,0,.65);font-weight:normal;letter-spacing:-0.3px">0.00</div>
<div class="b" style="left:1526.0px;top:664px;width:64px;height:22px;background:#f6ffed;border:1px solid #b7eb8f;color:#52c41a;border-radius:2px;font-size:12px;line-height:20px;text-align:center;white-space:nowrap">手动补单</div>
<div class="t" style="left:1616.0px;width:165px;text-align:center;top:664.5px;font-size:14px;line-height:22px;color:rgba(0,0,0,.65);font-weight:normal;letter-spacing:-0.3px">2022-12-7 12:25:55</div>
<div class="t" style="left:1781.0px;width:156px;text-align:center;top:664.5px;font-size:14px;line-height:22px;color:rgba(0,0,0,.65);font-weight:normal;letter-spacing:-0.3px">2022-12-7 12:26:3</div>
<div class="t" style="left:1937.0px;width:92px;text-align:center;top:664.5px;font-size:14px;line-height:22px;color:rgba(0,0,0,.65);font-weight:normal;letter-spacing:-0.3px">USDT</div>
<div class="t" style="left:2027.5px;width:95px;text-align:center;top:664.5px;font-size:14px;line-height:22px;color:rgba(0,0,0,.65);font-weight:normal;letter-spacing:-0.3px">A代理</div>
<div class="t" style="left:2124.0px;width:101px;text-align:center;top:664.5px;font-size:14px;line-height:22px;color:rgba(0,0,0,.65);font-weight:normal;letter-spacing:-0.3px">Pt_UsdtPay</div>
<div class="b" style="left:2241.5px;top:664px;width:64px;height:22px;background:#f6ffed;border:1px solid #b7eb8f;color:#52c41a;border-radius:2px;font-size:12px;line-height:20px;text-align:center;white-space:nowrap">充值成功</div>
<div class="t" style="left:2335.0px;width:160px;text-align:center;top:664.5px;font-size:14px;line-height:22px;color:#13c2c2;font-weight:normal;">用户详情</div>
<div class="b" style="left:328px;top:722.5px;width:16px;height:16px;border:1px solid #d9d9d9;border-radius:2px;background:#fff"></div>
<div class="t" style="left:365.0px;width:57px;text-align:center;top:719.5px;font-size:14px;line-height:22px;color:rgba(0,0,0,.65);font-weight:normal;letter-spacing:-0.3px">221</div>
<div class="t" style="left:422.0px;width:239px;text-align:center;top:719.5px;font-size:14px;line-height:22px;color:rgba(0,0,0,.65);font-weight:normal;letter-spacing:-0.3px">DS202212071222564131356142</div>
<div class="t" style="left:661.0px;width:91px;text-align:center;top:719.5px;font-size:14px;line-height:22px;color:rgba(0,0,0,.65);font-weight:normal;letter-spacing:-0.3px">AB-1</div>
<div class="t" style="left:752.0px;width:128px;text-align:center;top:719.5px;font-size:14px;line-height:22px;color:rgba(0,0,0,.65);font-weight:normal;letter-spacing:-0.3px">123456778899</div>
<div class="t" style="left:880.0px;width:91px;text-align:center;top:719.5px;font-size:14px;line-height:22px;color:rgba(0,0,0,.65);font-weight:normal;letter-spacing:-0.3px">正式会员</div>
<div class="t" style="left:971.0px;width:92px;text-align:center;top:719.5px;font-size:14px;line-height:22px;color:rgba(0,0,0,.65);font-weight:normal;letter-spacing:-0.3px">1600.00</div>
<div class="t" style="left:1063.0px;width:92px;text-align:center;top:719.5px;font-size:14px;line-height:22px;color:rgba(0,0,0,.65);font-weight:normal;letter-spacing:-0.3px">0.00</div>
<div class="t" style="left:1155.0px;width:112px;text-align:center;top:719.5px;font-size:14px;line-height:22px;color:rgba(0,0,0,.65);font-weight:normal;letter-spacing:-0.3px">300.00</div>
<div class="t" style="left:1267.0px;width:135px;text-align:center;top:719.5px;font-size:14px;line-height:22px;color:rgba(0,0,0,.65);font-weight:normal;letter-spacing:-0.3px">0.00</div>
<div class="t" style="left:1402.0px;width:106px;text-align:center;top:719.5px;font-size:14px;line-height:22px;color:rgba(0,0,0,.65);font-weight:normal;letter-spacing:-0.3px">0.00</div>
<div class="b" style="left:1526.0px;top:719px;width:64px;height:22px;background:#f6ffed;border:1px solid #b7eb8f;color:#52c41a;border-radius:2px;font-size:12px;line-height:20px;text-align:center;white-space:nowrap">手动补单</div>
<div class="t" style="left:1616.0px;width:165px;text-align:center;top:719.5px;font-size:14px;line-height:22px;color:rgba(0,0,0,.65);font-weight:normal;letter-spacing:-0.3px">2022-12-7 12:22:56</div>
<div class="t" style="left:1781.0px;width:156px;text-align:center;top:719.5px;font-size:14px;line-height:22px;color:rgba(0,0,0,.65);font-weight:normal;letter-spacing:-0.3px">2022-12-7 12:23:6</div>
<div class="t" style="left:1937.0px;width:92px;text-align:center;top:719.5px;font-size:14px;line-height:22px;color:rgba(0,0,0,.65);font-weight:normal;letter-spacing:-0.3px">USDT</div>
<div class="t" style="left:2027.5px;width:95px;text-align:center;top:719.5px;font-size:14px;line-height:22px;color:rgba(0,0,0,.65);font-weight:normal;letter-spacing:-0.3px">A代理</div>
<div class="t" style="left:2124.0px;width:101px;text-align:center;top:719.5px;font-size:14px;line-height:22px;color:rgba(0,0,0,.65);font-weight:normal;letter-spacing:-0.3px">Pt_UsdtPay</div>
<div class="b" style="left:2241.5px;top:719px;width:64px;height:22px;background:#f6ffed;border:1px solid #b7eb8f;color:#52c41a;border-radius:2px;font-size:12px;line-height:20px;text-align:center;white-space:nowrap">充值成功</div>
<div class="t" style="left:2335.0px;width:160px;text-align:center;top:719.5px;font-size:14px;line-height:22px;color:#13c2c2;font-weight:normal;">用户详情</div>
<div class="b" style="left:328px;top:777.5px;width:16px;height:16px;border:1px solid #d9d9d9;border-radius:2px;background:#fff"></div>
<div class="t" style="left:365.0px;width:57px;text-align:center;top:774.5px;font-size:14px;line-height:22px;color:rgba(0,0,0,.65);font-weight:normal;letter-spacing:-0.3px">220</div>
<div class="t" style="left:422.0px;width:239px;text-align:center;top:774.5px;font-size:14px;line-height:22px;color:rgba(0,0,0,.65);font-weight:normal;letter-spacing:-0.3px">DS202212071219236283854228</div>
<div class="t" style="left:661.0px;width:91px;text-align:center;top:774.5px;font-size:14px;line-height:22px;color:rgba(0,0,0,.65);font-weight:normal;letter-spacing:-0.3px">AB-1</div>
<div class="t" style="left:752.0px;width:128px;text-align:center;top:774.5px;font-size:14px;line-height:22px;color:rgba(0,0,0,.65);font-weight:normal;letter-spacing:-0.3px">123456778899</div>
<div class="t" style="left:880.0px;width:91px;text-align:center;top:774.5px;font-size:14px;line-height:22px;color:rgba(0,0,0,.65);font-weight:normal;letter-spacing:-0.3px">正式会员</div>
<div class="t" style="left:971.0px;width:92px;text-align:center;top:774.5px;font-size:14px;line-height:22px;color:rgba(0,0,0,.65);font-weight:normal;letter-spacing:-0.3px">1600.00</div>
<div class="t" style="left:1063.0px;width:92px;text-align:center;top:774.5px;font-size:14px;line-height:22px;color:rgba(0,0,0,.65);font-weight:normal;letter-spacing:-0.3px">0.00</div>
<div class="t" style="left:1155.0px;width:112px;text-align:center;top:774.5px;font-size:14px;line-height:22px;color:rgba(0,0,0,.65);font-weight:normal;letter-spacing:-0.3px">100.00</div>
<div class="t" style="left:1267.0px;width:135px;text-align:center;top:774.5px;font-size:14px;line-height:22px;color:rgba(0,0,0,.65);font-weight:normal;letter-spacing:-0.3px">0.00</div>
<div class="t" style="left:1402.0px;width:106px;text-align:center;top:774.5px;font-size:14px;line-height:22px;color:rgba(0,0,0,.65);font-weight:normal;letter-spacing:-0.3px">0.00</div>
<div class="b" style="left:1526.0px;top:774px;width:64px;height:22px;background:#f6ffed;border:1px solid #b7eb8f;color:#52c41a;border-radius:2px;font-size:12px;line-height:20px;text-align:center;white-space:nowrap">手动补单</div>
<div class="t" style="left:1616.0px;width:165px;text-align:center;top:774.5px;font-size:14px;line-height:22px;color:rgba(0,0,0,.65);font-weight:normal;letter-spacing:-0.3px">2022-12-7 12:19:23</div>
<div class="t" style="left:1781.0px;width:156px;text-align:center;top:774.5px;font-size:14px;line-height:22px;color:rgba(0,0,0,.65);font-weight:normal;letter-spacing:-0.3px">2022-12-7 12:19:59</div>
<div class="t" style="left:1937.0px;width:92px;text-align:center;top:774.5px;font-size:14px;line-height:22px;color:rgba(0,0,0,.65);font-weight:normal;letter-spacing:-0.3px">USDT</div>
<div class="t" style="left:2027.5px;width:95px;text-align:center;top:774.5px;font-size:14px;line-height:22px;color:rgba(0,0,0,.65);font-weight:normal;letter-spacing:-0.3px">A代理</div>
<div class="t" style="left:2124.0px;width:101px;text-align:center;top:774.5px;font-size:14px;line-height:22px;color:rgba(0,0,0,.65);font-weight:normal;letter-spacing:-0.3px">Pt_UsdtPay</div>
<div class="b" style="left:2241.5px;top:774px;width:64px;height:22px;background:#f6ffed;border:1px solid #b7eb8f;color:#52c41a;border-radius:2px;font-size:12px;line-height:20px;text-align:center;white-space:nowrap">充值成功</div>
<div class="t" style="left:2335.0px;width:160px;text-align:center;top:774.5px;font-size:14px;line-height:22px;color:#13c2c2;font-weight:normal;">用户详情</div>
<div class="b" style="left:328px;top:832.5px;width:16px;height:16px;border:1px solid #d9d9d9;border-radius:2px;background:#fff"></div>
<div class="t" style="left:365.0px;width:57px;text-align:center;top:829.5px;font-size:14px;line-height:22px;color:rgba(0,0,0,.65);font-weight:normal;letter-spacing:-0.3px">219</div>
<div class="t" style="left:422.0px;width:239px;text-align:center;top:829.5px;font-size:14px;line-height:22px;color:rgba(0,0,0,.65);font-weight:normal;letter-spacing:-0.3px">DS202210301534443696853029</div>
<div class="t" style="left:661.0px;width:91px;text-align:center;top:829.5px;font-size:14px;line-height:22px;color:rgba(0,0,0,.65);font-weight:normal;letter-spacing:-0.3px">ceshi</div>
<div class="t" style="left:752.0px;width:128px;text-align:center;top:829.5px;font-size:14px;line-height:22px;color:rgba(0,0,0,.65);font-weight:normal;letter-spacing:-0.3px">666666</div>
<div class="t" style="left:880.0px;width:91px;text-align:center;top:829.5px;font-size:14px;line-height:22px;color:rgba(0,0,0,.65);font-weight:normal;letter-spacing:-0.3px">正式会员</div>
<div class="t" style="left:971.0px;width:92px;text-align:center;top:829.5px;font-size:14px;line-height:22px;color:rgba(0,0,0,.65);font-weight:normal;letter-spacing:-0.3px">12502.25</div>
<div class="t" style="left:1063.0px;width:92px;text-align:center;top:829.5px;font-size:14px;line-height:22px;color:rgba(0,0,0,.65);font-weight:normal;letter-spacing:-0.3px">19797.30</div>
<div class="t" style="left:1155.0px;width:112px;text-align:center;top:829.5px;font-size:14px;line-height:22px;color:rgba(0,0,0,.65);font-weight:normal;letter-spacing:-0.3px">5000.00</div>
<div class="t" style="left:1267.0px;width:135px;text-align:center;top:829.5px;font-size:14px;line-height:22px;color:rgba(0,0,0,.65);font-weight:normal;letter-spacing:-0.3px">0.00</div>
<div class="t" style="left:1402.0px;width:106px;text-align:center;top:829.5px;font-size:14px;line-height:22px;color:rgba(0,0,0,.65);font-weight:normal;letter-spacing:-0.3px">0.00</div>
<div class="b" style="left:1532.0px;top:829px;width:52px;height:22px;background:#fff1f0;border:1px solid #ffa39e;color:#f5222d;border-radius:2px;font-size:12px;line-height:20px;text-align:center;white-space:nowrap">未到账</div>
<div class="t" style="left:1616.0px;width:165px;text-align:center;top:829.5px;font-size:14px;line-height:22px;color:rgba(0,0,0,.65);font-weight:normal;letter-spacing:-0.3px">2022-10-30 15:34:44</div>
<div class="t" style="left:1781.0px;width:156px;text-align:center;top:829.5px;font-size:14px;line-height:22px;color:rgba(0,0,0,.65);font-weight:normal;letter-spacing:-0.3px"></div>
<div class="t" style="left:1937.0px;width:92px;text-align:center;top:829.5px;font-size:14px;line-height:22px;color:rgba(0,0,0,.65);font-weight:normal;letter-spacing:-0.3px">USDT</div>
<div class="t" style="left:2027.5px;width:95px;text-align:center;top:829.5px;font-size:14px;line-height:22px;color:rgba(0,0,0,.65);font-weight:normal;letter-spacing:-0.3px">代理</div>
<div class="t" style="left:2124.0px;width:101px;text-align:center;top:829.5px;font-size:14px;line-height:22px;color:rgba(0,0,0,.65);font-weight:normal;letter-spacing:-0.3px">Pt_UsdtPay</div>
<div class="b" style="left:2241.5px;top:829px;width:64px;height:22px;background:#fff1f0;border:1px solid #ffa39e;color:#f5222d;border-radius:2px;font-size:12px;line-height:20px;text-align:center;white-space:nowrap">等待支付</div>
<div class="t" style="left:2352px;top:829.5px;font-size:14px;line-height:22px;color:#13c2c2;font-weight:normal;">用户详情</div>
<div class="t" style="left:2423px;top:829.5px;font-size:14px;line-height:22px;color:#13c2c2;font-weight:normal;">手动补单</div>
<div class="b" style="left:328px;top:887.5px;width:16px;height:16px;border:1px solid #d9d9d9;border-radius:2px;background:#fff"></div>
<div class="t" style="left:365.0px;width:57px;text-align:center;top:884.5px;font-size:14px;line-height:22px;color:rgba(0,0,0,.65);font-weight:normal;letter-spacing:-0.3px">218</div>
<div class="t" style="left:422.0px;width:239px;text-align:center;top:884.5px;font-size:14px;line-height:22px;color:rgba(0,0,0,.65);font-weight:normal;letter-spacing:-0.3px">DS202210301533561404615541</div>
<div class="t" style="left:661.0px;width:91px;text-align:center;top:884.5px;font-size:14px;line-height:22px;color:rgba(0,0,0,.65);font-weight:normal;letter-spacing:-0.3px">ceshi</div>
<div class="t" style="left:752.0px;width:128px;text-align:center;top:884.5px;font-size:14px;line-height:22px;color:rgba(0,0,0,.65);font-weight:normal;letter-spacing:-0.3px">666666</div>
<div class="t" style="left:880.0px;width:91px;text-align:center;top:884.5px;font-size:14px;line-height:22px;color:rgba(0,0,0,.65);font-weight:normal;letter-spacing:-0.3px">正式会员</div>
<div class="t" style="left:971.0px;width:92px;text-align:center;top:884.5px;font-size:14px;line-height:22px;color:rgba(0,0,0,.65);font-weight:normal;letter-spacing:-0.3px">12502.25</div>
<div class="t" style="left:1063.0px;width:92px;text-align:center;top:884.5px;font-size:14px;line-height:22px;color:rgba(0,0,0,.65);font-weight:normal;letter-spacing:-0.3px">19797.30</div>
<div class="t" style="left:1155.0px;width:112px;text-align:center;top:884.5px;font-size:14px;line-height:22px;color:rgba(0,0,0,.65);font-weight:normal;letter-spacing:-0.3px">3000.00</div>
<div class="t" style="left:1267.0px;width:135px;text-align:center;top:884.5px;font-size:14px;line-height:22px;color:rgba(0,0,0,.65);font-weight:normal;letter-spacing:-0.3px">0.00</div>
<div class="t" style="left:1402.0px;width:106px;text-align:center;top:884.5px;font-size:14px;line-height:22px;color:rgba(0,0,0,.65);font-weight:normal;letter-spacing:-0.3px">0.00</div>
<div class="b" style="left:1532.0px;top:884px;width:52px;height:22px;background:#fff1f0;border:1px solid #ffa39e;color:#f5222d;border-radius:2px;font-size:12px;line-height:20px;text-align:center;white-space:nowrap">未到账</div>
<div class="t" style="left:1616.0px;width:165px;text-align:center;top:884.5px;font-size:14px;line-height:22px;color:rgba(0,0,0,.65);font-weight:normal;letter-spacing:-0.3px">2022-10-30 15:33:56</div>
<div class="t" style="left:1781.0px;width:156px;text-align:center;top:884.5px;font-size:14px;line-height:22px;color:rgba(0,0,0,.65);font-weight:normal;letter-spacing:-0.3px"></div>
<div class="t" style="left:1937.0px;width:92px;text-align:center;top:884.5px;font-size:14px;line-height:22px;color:rgba(0,0,0,.65);font-weight:normal;letter-spacing:-0.3px">USDT</div>
<div class="t" style="left:2027.5px;width:95px;text-align:center;top:884.5px;font-size:14px;line-height:22px;color:rgba(0,0,0,.65);font-weight:normal;letter-spacing:-0.3px">代理</div>
<div class="t" style="left:2124.0px;width:101px;text-align:center;top:884.5px;font-size:14px;line-height:22px;color:rgba(0,0,0,.65);font-weight:normal;letter-spacing:-0.3px">Pt_UsdtPay</div>
<div class="b" style="left:2241.5px;top:884px;width:64px;height:22px;background:#fff1f0;border:1px solid #ffa39e;color:#f5222d;border-radius:2px;font-size:12px;line-height:20px;text-align:center;white-space:nowrap">等待支付</div>
<div class="t" style="left:2352px;top:884.5px;font-size:14px;line-height:22px;color:#13c2c2;font-weight:normal;">用户详情</div>
<div class="t" style="left:2423px;top:884.5px;font-size:14px;line-height:22px;color:#13c2c2;font-weight:normal;">手动补单</div>
<div class="b" style="left:328px;top:942.5px;width:16px;height:16px;border:1px solid #d9d9d9;border-radius:2px;background:#fff"></div>
<div class="t" style="left:365.0px;width:57px;text-align:center;top:939.5px;font-size:14px;line-height:22px;color:rgba(0,0,0,.65);font-weight:normal;letter-spacing:-0.3px">217</div>
<div class="t" style="left:422.0px;width:239px;text-align:center;top:939.5px;font-size:14px;line-height:22px;color:rgba(0,0,0,.65);font-weight:normal;letter-spacing:-0.3px">DS202210301529468892423126</div>
<div class="t" style="left:661.0px;width:91px;text-align:center;top:939.5px;font-size:14px;line-height:22px;color:rgba(0,0,0,.65);font-weight:normal;letter-spacing:-0.3px">ceshi</div>
<div class="t" style="left:752.0px;width:128px;text-align:center;top:939.5px;font-size:14px;line-height:22px;color:rgba(0,0,0,.65);font-weight:normal;letter-spacing:-0.3px">666666</div>
<div class="t" style="left:880.0px;width:91px;text-align:center;top:939.5px;font-size:14px;line-height:22px;color:rgba(0,0,0,.65);font-weight:normal;letter-spacing:-0.3px">正式会员</div>
<div class="t" style="left:971.0px;width:92px;text-align:center;top:939.5px;font-size:14px;line-height:22px;color:rgba(0,0,0,.65);font-weight:normal;letter-spacing:-0.3px">12502.25</div>
<div class="t" style="left:1063.0px;width:92px;text-align:center;top:939.5px;font-size:14px;line-height:22px;color:rgba(0,0,0,.65);font-weight:normal;letter-spacing:-0.3px">19797.30</div>
<div class="t" style="left:1155.0px;width:112px;text-align:center;top:939.5px;font-size:14px;line-height:22px;color:rgba(0,0,0,.65);font-weight:normal;letter-spacing:-0.3px">30000.00</div>
<div class="t" style="left:1267.0px;width:135px;text-align:center;top:939.5px;font-size:14px;line-height:22px;color:rgba(0,0,0,.65);font-weight:normal;letter-spacing:-0.3px">0.00</div>
<div class="t" style="left:1402.0px;width:106px;text-align:center;top:939.5px;font-size:14px;line-height:22px;color:rgba(0,0,0,.65);font-weight:normal;letter-spacing:-0.3px">0.00</div>
<div class="b" style="left:1532.0px;top:939px;width:52px;height:22px;background:#fff1f0;border:1px solid #ffa39e;color:#f5222d;border-radius:2px;font-size:12px;line-height:20px;text-align:center;white-space:nowrap">未到账</div>
<div class="t" style="left:1616.0px;width:165px;text-align:center;top:939.5px;font-size:14px;line-height:22px;color:rgba(0,0,0,.65);font-weight:normal;letter-spacing:-0.3px">2022-10-30 15:29:46</div>
<div class="t" style="left:1781.0px;width:156px;text-align:center;top:939.5px;font-size:14px;line-height:22px;color:rgba(0,0,0,.65);font-weight:normal;letter-spacing:-0.3px"></div>
<div class="t" style="left:1937.0px;width:92px;text-align:center;top:939.5px;font-size:14px;line-height:22px;color:rgba(0,0,0,.65);font-weight:normal;letter-spacing:-0.3px">USDT</div>
<div class="t" style="left:2027.5px;width:95px;text-align:center;top:939.5px;font-size:14px;line-height:22px;color:rgba(0,0,0,.65);font-weight:normal;letter-spacing:-0.3px">代理</div>
<div class="t" style="left:2124.0px;width:101px;text-align:center;top:939.5px;font-size:14px;line-height:22px;color:rgba(0,0,0,.65);font-weight:normal;letter-spacing:-0.3px">Pt_UsdtPay</div>
<div class="b" style="left:2241.5px;top:939px;width:64px;height:22px;background:#fff1f0;border:1px solid #ffa39e;color:#f5222d;border-radius:2px;font-size:12px;line-height:20px;text-align:center;white-space:nowrap">等待支付</div>
<div class="t" style="left:2352px;top:939.5px;font-size:14px;line-height:22px;color:#13c2c2;font-weight:normal;">用户详情</div>
<div class="t" style="left:2423px;top:939.5px;font-size:14px;line-height:22px;color:#13c2c2;font-weight:normal;">手动补单</div>
<div class="b" style="left:328px;top:997.5px;width:16px;height:16px;border:1px solid #d9d9d9;border-radius:2px;background:#fff"></div>
<div class="t" style="left:365.0px;width:57px;text-align:center;top:994.5px;font-size:14px;line-height:22px;color:rgba(0,0,0,.65);font-weight:normal;letter-spacing:-0.3px">216</div>
<div class="t" style="left:422.0px;width:239px;text-align:center;top:994.5px;font-size:14px;line-height:22px;color:rgba(0,0,0,.65);font-weight:normal;letter-spacing:-0.3px">DS202210301528253273095830</div>
<div class="t" style="left:661.0px;width:91px;text-align:center;top:994.5px;font-size:14px;line-height:22px;color:rgba(0,0,0,.65);font-weight:normal;letter-spacing:-0.3px">ceshi</div>
<div class="t" style="left:752.0px;width:128px;text-align:center;top:994.5px;font-size:14px;line-height:22px;color:rgba(0,0,0,.65);font-weight:normal;letter-spacing:-0.3px">666666</div>
<div class="t" style="left:880.0px;width:91px;text-align:center;top:994.5px;font-size:14px;line-height:22px;color:rgba(0,0,0,.65);font-weight:normal;letter-spacing:-0.3px">正式会员</div>
<div class="t" style="left:971.0px;width:92px;text-align:center;top:994.5px;font-size:14px;line-height:22px;color:rgba(0,0,0,.65);font-weight:normal;letter-spacing:-0.3px">12502.25</div>
<div class="t" style="left:1063.0px;width:92px;text-align:center;top:994.5px;font-size:14px;line-height:22px;color:rgba(0,0,0,.65);font-weight:normal;letter-spacing:-0.3px">19797.30</div>
<div class="t" style="left:1155.0px;width:112px;text-align:center;top:994.5px;font-size:14px;line-height:22px;color:rgba(0,0,0,.65);font-weight:normal;letter-spacing:-0.3px">3000.00</div>
<div class="t" style="left:1267.0px;width:135px;text-align:center;top:994.5px;font-size:14px;line-height:22px;color:rgba(0,0,0,.65);font-weight:normal;letter-spacing:-0.3px">0.00</div>
<div class="t" style="left:1402.0px;width:106px;text-align:center;top:994.5px;font-size:14px;line-height:22px;color:rgba(0,0,0,.65);font-weight:normal;letter-spacing:-0.3px">0.00</div>
<div class="b" style="left:1532.0px;top:994px;width:52px;height:22px;background:#fff1f0;border:1px solid #ffa39e;color:#f5222d;border-radius:2px;font-size:12px;line-height:20px;text-align:center;white-space:nowrap">未到账</div>
<div class="t" style="left:1616.0px;width:165px;text-align:center;top:994.5px;font-size:14px;line-height:22px;color:rgba(0,0,0,.65);font-weight:normal;letter-spacing:-0.3px">2022-10-30 15:28:25</div>
<div class="t" style="left:1781.0px;width:156px;text-align:center;top:994.5px;font-size:14px;line-height:22px;color:rgba(0,0,0,.65);font-weight:normal;letter-spacing:-0.3px"></div>
<div class="t" style="left:1937.0px;width:92px;text-align:center;top:994.5px;font-size:14px;line-height:22px;color:rgba(0,0,0,.65);font-weight:normal;letter-spacing:-0.3px">USDT</div>
<div class="t" style="left:2027.5px;width:95px;text-align:center;top:994.5px;font-size:14px;line-height:22px;color:rgba(0,0,0,.65);font-weight:normal;letter-spacing:-0.3px">代理</div>
<div class="t" style="left:2124.0px;width:101px;text-align:center;top:994.5px;font-size:14px;line-height:22px;color:rgba(0,0,0,.65);font-weight:normal;letter-spacing:-0.3px">Pt_UsdtPay</div>
<div class="b" style="left:2241.5px;top:994px;width:64px;height:22px;background:#fff1f0;border:1px solid #ffa39e;color:#f5222d;border-radius:2px;font-size:12px;line-height:20px;text-align:center;white-space:nowrap">等待支付</div>
<div class="t" style="left:2352px;top:994.5px;font-size:14px;line-height:22px;color:#13c2c2;font-weight:normal;">用户详情</div>
<div class="t" style="left:2423px;top:994.5px;font-size:14px;line-height:22px;color:#13c2c2;font-weight:normal;">手动补单</div>
<div class="b" style="left:328px;top:1052.5px;width:16px;height:16px;border:1px solid #d9d9d9;border-radius:2px;background:#fff"></div>
<div class="t" style="left:365.0px;width:57px;text-align:center;top:1049.5px;font-size:14px;line-height:22px;color:rgba(0,0,0,.65);font-weight:normal;letter-spacing:-0.3px">215</div>
<div class="t" style="left:422.0px;width:239px;text-align:center;top:1049.5px;font-size:14px;line-height:22px;color:rgba(0,0,0,.65);font-weight:normal;letter-spacing:-0.3px">DS202210301527476002958925</div>
<div class="t" style="left:661.0px;width:91px;text-align:center;top:1049.5px;font-size:14px;line-height:22px;color:rgba(0,0,0,.65);font-weight:normal;letter-spacing:-0.3px">ceshi</div>
<div class="t" style="left:752.0px;width:128px;text-align:center;top:1049.5px;font-size:14px;line-height:22px;color:rgba(0,0,0,.65);font-weight:normal;letter-spacing:-0.3px">666666</div>
<div class="t" style="left:880.0px;width:91px;text-align:center;top:1049.5px;font-size:14px;line-height:22px;color:rgba(0,0,0,.65);font-weight:normal;letter-spacing:-0.3px">正式会员</div>
<div class="t" style="left:971.0px;width:92px;text-align:center;top:1049.5px;font-size:14px;line-height:22px;color:rgba(0,0,0,.65);font-weight:normal;letter-spacing:-0.3px">12502.25</div>
<div class="t" style="left:1063.0px;width:92px;text-align:center;top:1049.5px;font-size:14px;line-height:22px;color:rgba(0,0,0,.65);font-weight:normal;letter-spacing:-0.3px">19797.30</div>
<div class="t" style="left:1155.0px;width:112px;text-align:center;top:1049.5px;font-size:14px;line-height:22px;color:rgba(0,0,0,.65);font-weight:normal;letter-spacing:-0.3px">10.00</div>
<div class="t" style="left:1267.0px;width:135px;text-align:center;top:1049.5px;font-size:14px;line-height:22px;color:rgba(0,0,0,.65);font-weight:normal;letter-spacing:-0.3px">0.00</div>
<div class="t" style="left:1402.0px;width:106px;text-align:center;top:1049.5px;font-size:14px;line-height:22px;color:rgba(0,0,0,.65);font-weight:normal;letter-spacing:-0.3px">0.00</div>
<div class="b" style="left:1532.0px;top:1049px;width:52px;height:22px;background:#fff1f0;border:1px solid #ffa39e;color:#f5222d;border-radius:2px;font-size:12px;line-height:20px;text-align:center;white-space:nowrap">未到账</div>
<div class="t" style="left:1616.0px;width:165px;text-align:center;top:1049.5px;font-size:14px;line-height:22px;color:rgba(0,0,0,.65);font-weight:normal;letter-spacing:-0.3px">2022-10-30 15:27:47</div>
<div class="t" style="left:1781.0px;width:156px;text-align:center;top:1049.5px;font-size:14px;line-height:22px;color:rgba(0,0,0,.65);font-weight:normal;letter-spacing:-0.3px"></div>
<div class="t" style="left:1937.0px;width:92px;text-align:center;top:1049.5px;font-size:14px;line-height:22px;color:rgba(0,0,0,.65);font-weight:normal;letter-spacing:-0.3px">USDT</div>
<div class="t" style="left:2027.5px;width:95px;text-align:center;top:1049.5px;font-size:14px;line-height:22px;color:rgba(0,0,0,.65);font-weight:normal;letter-spacing:-0.3px">代理</div>
<div class="t" style="left:2124.0px;width:101px;text-align:center;top:1049.5px;font-size:14px;line-height:22px;color:rgba(0,0,0,.65);font-weight:normal;letter-spacing:-0.3px">Pt_UsdtPay</div>
<div class="b" style="left:2241.5px;top:1049px;width:64px;height:22px;background:#fff1f0;border:1px solid #ffa39e;color:#f5222d;border-radius:2px;font-size:12px;line-height:20px;text-align:center;white-space:nowrap">等待支付</div>
<div class="t" style="left:2352px;top:1049.5px;font-size:14px;line-height:22px;color:#13c2c2;font-weight:normal;">用户详情</div>
<div class="t" style="left:2423px;top:1049.5px;font-size:14px;line-height:22px;color:#13c2c2;font-weight:normal;">手动补单</div>
<div class="b" style="left:305px;top:1088px;width:2196px;height:15px;background:#b5f5ec"></div>
<svg class="b" style="left:309px;top:1090px;" width="9" height="11" viewBox="0 0 9 11"><path d="M7.5 1.5V9.5L1.5 5.5z" fill="#13c2c2" stroke="#13c2c2" stroke-width="1.2" stroke-linejoin="round"/></svg>
<svg class="b" style="left:2488px;top:1090px;" width="9" height="11" viewBox="0 0 9 11"><path d="M1.5 1.5V9.5L7.5 5.5z" fill="#13c2c2" stroke="#13c2c2" stroke-width="1.2" stroke-linejoin="round"/></svg>
<div class="b" style="left:2008px;top:1119px;width:32px;height:32px;border:1px solid #d9d9d9;border-radius:2px;background:#fff"></div>
<svg class="b" style="left:2019px;top:1130px;" width="10" height="12" viewBox="0 0 10 12"><path d="M7.5 1 2.5 6 7.5 11" fill="none" stroke="rgba(0,0,0,.25)" stroke-width="1.2"/></svg>
<div class="b" style="left:2048px;top:1119px;width:32px;height:32px;border:1px solid #13c2c2;border-radius:2px;background:#fff"></div>
<div class="t" style="left:2048.0px;width:32px;text-align:center;top:1124.0px;font-size:14px;line-height:22px;color:#13c2c2;font-weight:normal;">1</div>
<div class="b" style="left:2088px;top:1119px;width:32px;height:32px;border:1px solid #d9d9d9;border-radius:2px;background:#fff"></div>
<div class="t" style="left:2088.0px;width:32px;text-align:center;top:1124.0px;font-size:14px;line-height:22px;color:rgba(0,0,0,.85);font-weight:normal;">2</div>
<div class="b" style="left:2128px;top:1119px;width:32px;height:32px;border:1px solid #d9d9d9;border-radius:2px;background:#fff"></div>
<div class="t" style="left:2128.0px;width:32px;text-align:center;top:1124.0px;font-size:14px;line-height:22px;color:rgba(0,0,0,.85);font-weight:normal;">3</div>
<svg class="b" style="left:2174px;top:1133px;" width="18" height="4" viewBox="0 0 18 4"><circle cx="2" cy="2" r="1.5" fill="rgba(0,0,0,.25)"/><circle cx="9" cy="2" r="1.5" fill="rgba(0,0,0,.25)"/><circle cx="16" cy="2" r="1.5" fill="rgba(0,0,0,.25)"/></svg>
<div class="b" style="left:2208px;top:1119px;width:32px;height:32px;border:1px solid #d9d9d9;border-radius:2px;background:#fff"></div>
<div class="t" style="left:2208.0px;width:32px;text-align:center;top:1124.0px;font-size:14px;line-height:22px;color:rgba(0,0,0,.85);font-weight:normal;">23</div>
<div class="b" style="left:2248px;top:1119px;width:32px;height:32px;border:1px solid #d9d9d9;border-radius:2px;background:#fff"></div>
<svg class="b" style="left:2259px;top:1130px;" width="10" height="12" viewBox="0 0 10 12"><path d="M2.5 1 7.5 6 2.5 11" fill="none" stroke="rgba(0,0,0,.65)" stroke-width="1.2"/></svg>
<div class="b" style="left:2296px;top:1119px;width:88px;height:32px;border:1px solid #d9d9d9;border-radius:2px;background:#fff"></div>
<div class="t" style="left:2308px;top:1124.0px;font-size:14px;line-height:22px;color:rgba(0,0,0,.65);font-weight:normal;">10 条/页</div>
<svg class="b" style="left:2362px;top:1131px;" width="11" height="8" viewBox="0 0 11 8"><path d="M1 1.5 5.5 6.5 10 1.5" fill="none" stroke="rgba(0,0,0,.25)" stroke-width="1.1"/></svg>
<div class="t" style="left:2393px;top:1124.0px;font-size:14px;line-height:22px;color:rgba(0,0,0,.65);font-weight:normal;">跳至</div>
<div class="b" style="left:2429px;top:1119px;width:50px;height:32px;border:1px solid #d9d9d9;border-radius:2px;background:#fff"></div>
<div class="t" style="left:2487px;top:1124.0px;font-size:14px;line-height:22px;color:rgba(0,0,0,.65);font-weight:normal;">页</div>
<div class="b" style="left:2550px;top:0px;width:10px;height:1305px;background:#b5f5ec;z-index:6"></div>
<svg class="b" style="left:2550px;top:0px;z-index:7" width="10" height="10" viewBox="0 0 10 10"><path d="M2.3 7 5 3.2 7.7 7z" fill="#13c2c2" stroke="#13c2c2" stroke-width="0.9" stroke-linejoin="round"/></svg>
<svg class="b" style="left:2550px;top:1295px;z-index:7" width="10" height="10" viewBox="0 0 10 10"><path d="M2.3 3 7.7 3 5 6.8z" fill="#13c2c2" stroke="#13c2c2" stroke-width="0.9" stroke-linejoin="round"/></svg>
<div class="b" style="left:2520px;top:200px;width:40px;height:40px;background:#13c2c2;border-radius:4px 0 0 4px;box-shadow:0 0 6px rgba(0,0,0,.12);z-index:8"></div>
<svg class="b" style="left:2530px;top:211px;z-index:9" width="20" height="20" viewBox="0 0 20 20"><path d="M6.50 3.94 L7.49 3.46 L7.91 0.94 L12.09 0.94 L12.51 3.46 L13.50 3.94 L14.41 4.56 L16.80 3.66 L18.89 7.28 L16.91 8.90 L17.00 10.00 L16.91 11.10 L18.89 12.72 L16.80 16.34 L14.41 15.44 L13.50 16.06 L12.51 16.54 L12.09 19.06 L7.91 19.06 L7.49 16.54 L6.50 16.06 L5.59 15.44 L3.20 16.34 L1.11 12.72 L3.09 11.10 L3.00 10.00 L3.09 8.90 L1.11 7.28 L3.20 3.66 L5.59 4.56z" fill="none" stroke="#fff" stroke-width="1.5" stroke-linejoin="round"/><circle cx="10" cy="10" r="3" fill="none" stroke="#fff" stroke-width="1.5"/></svg>
</body></html>
